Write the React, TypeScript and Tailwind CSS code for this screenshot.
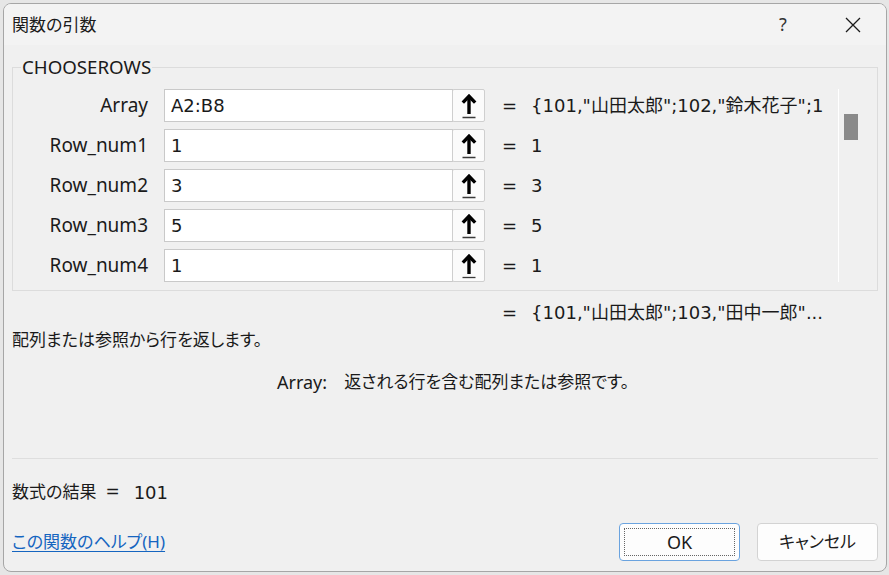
import React from "react";

const jp = "font-['Noto_Sans','Noto_Sans_CJK_JP',sans-serif] [font-feature-settings:'palt']";
const val = "font-['DejaVu_Sans','Noto_Sans_CJK_JP',sans-serif]";

const rows = [
  { label: "Array", value: "A2:B8", result: '{101,"山田太郎";102,"鈴木花子";1' },
  { label: "Row_num1", value: "1", result: "1" },
  { label: "Row_num2", value: "3", result: "3" },
  { label: "Row_num3", value: "5", result: "5" },
  { label: "Row_num4", value: "1", result: "1" },
];

function RefIcon() {
  return (
    <svg width="16" height="26" viewBox="0 0 16 26">
      <path d="M8 4v17" stroke="#000" strokeWidth="3.4" fill="none" />
      <path d="M1.8 9.6L8 3.2l6.2 6.4" stroke="#000" strokeWidth="3.4" fill="none" />
      <path d="M1.5 24.5h13" stroke="#3a3a3a" strokeWidth="1.3" />
    </svg>
  );
}

function CloseIcon() {
  return (
    <svg width="16" height="16" viewBox="0 0 16 16">
      <path d="M1 1l14 14M15 1L1 15" stroke="#1a1a1a" strokeWidth="1.3" />
    </svg>
  );
}

export default function App() {
  return (
    <div className="w-[889px] h-[575px] bg-[#e6e6e6] overflow-hidden pt-[3px] pl-[3px]">
      <div className="w-[884px] h-[569px] rounded-[8px] border border-[#a6a6a6] bg-[#f0f0f0] flex flex-col overflow-hidden text-[#1a1a1a]">
        {/* Title bar */}
        <div className="h-[41px] bg-[#f3f3f3] flex items-center pl-[8px] pr-[13px]">
          <span className={`${jp} text-[17px]`}>関数の引数</span>
          <div className="ml-auto flex items-center gap-[30px]">
            <span className="w-[40px] text-center font-['Noto_Sans',sans-serif] text-[18px] text-[#333]">?</span>
            <span className="w-[40px] flex justify-center">
              <CloseIcon />
            </span>
          </div>
        </div>

        <div className="flex flex-col px-[8px]">
          {/* Group box */}
          <div className="relative mt-[22px] border border-[#dcdcdc] flex pt-[21px] pb-[8px]">
            <span className="absolute -top-[13px] left-[8px] px-[1px] bg-[#f0f0f0] font-['Noto_Sans',sans-serif] text-[18.7px] leading-[24px]">
              CHOOSEROWS
            </span>
            <div className="flex-1 flex flex-col gap-[7px] min-w-0">
              {rows.map((r) => (
                <div key={r.label} className="h-[33px] flex items-center">
                  <span className="w-[135px] text-right font-['Noto_Sans',sans-serif] text-[19px]">{r.label}</span>
                  <div className="ml-[16px] h-[33px] w-[289px] bg-white border border-[#c9c9c9] flex items-center pl-[6px]">
                    <span className={`${val} text-[18px]`}>{r.value}</span>
                  </div>
                  <div className="-ml-[1px] h-[33px] w-[33px] bg-[#fbfbfb] border border-[#cfcfcf] rounded-[2px] flex items-center justify-center">
                    <RefIcon />
                  </div>
                  <span className={`${val} ml-[17px] text-[18px]`}>=</span>
                  <span className={`${val} ml-[14px] text-[18px] whitespace-nowrap overflow-hidden flex-1 min-w-0`}>
                    {r.result}
                  </span>
                </div>
              ))}
            </div>
            <div className="w-[26px] border-l border-white mr-[13px]">
              <div className="ml-[5px] mt-[25px] w-[14px] h-[26px] bg-[#8a8a8a]" />
            </div>
          </div>

          {/* Formula result preview */}
          <div className={`${val} mt-[10px] h-[22px] flex items-center pl-[490px] text-[18px]`}>
            <span>=</span>
            <span className="ml-[14px] whitespace-nowrap">{'{101,"山田太郎";103,"田中一郎"...'}</span>
          </div>

          <div className={`${jp} mt-[6px] h-[22px] flex items-center text-[17px]`}>
            配列または参照から行を返します。
          </div>

          <div className={`${jp} mt-[20px] h-[22px] flex items-center pl-[265px] text-[17px]`}>
            <span className="font-['Noto_Sans',sans-serif] text-[18px]">Array:</span>
            <span className="ml-[17px]">返される行を含む配列または参照です。</span>
          </div>

          <div className="mt-[65px] h-px bg-[#dedede]" />

          <div className={`${jp} mt-[22px] h-[22px] flex items-center text-[17px]`}>
            <span>数式の結果</span>
            <span className="ml-[9px] font-['DejaVu_Sans',sans-serif]">=</span>
            <span className={`${val} ml-[14px] text-[18px]`}>101</span>
          </div>

          <div className="mt-[20px] flex items-center">
            <a href="#" className={`${jp} text-[17px] text-[#1565c0] underline underline-offset-[3px]`}>
              この関数のヘルプ(H)
            </a>
            <div className="ml-auto flex gap-[17px]">
              <button className="w-[121px] h-[38px] rounded-[4px] border border-[#6aa3df] bg-[#fdfdfd] p-[4px]">
                <div className="w-full h-full border border-dotted border-[#666] flex items-center justify-center font-['Noto_Sans',sans-serif] text-[18px]">
                  OK
                </div>
              </button>
              <button className={`${jp} w-[121px] h-[38px] rounded-[4px] border border-[#d3d3d3] bg-[#fdfdfd] text-[17px]`}>
                キャンセル
              </button>
            </div>
          </div>
        </div>
      </div>
    </div>
  );
}
